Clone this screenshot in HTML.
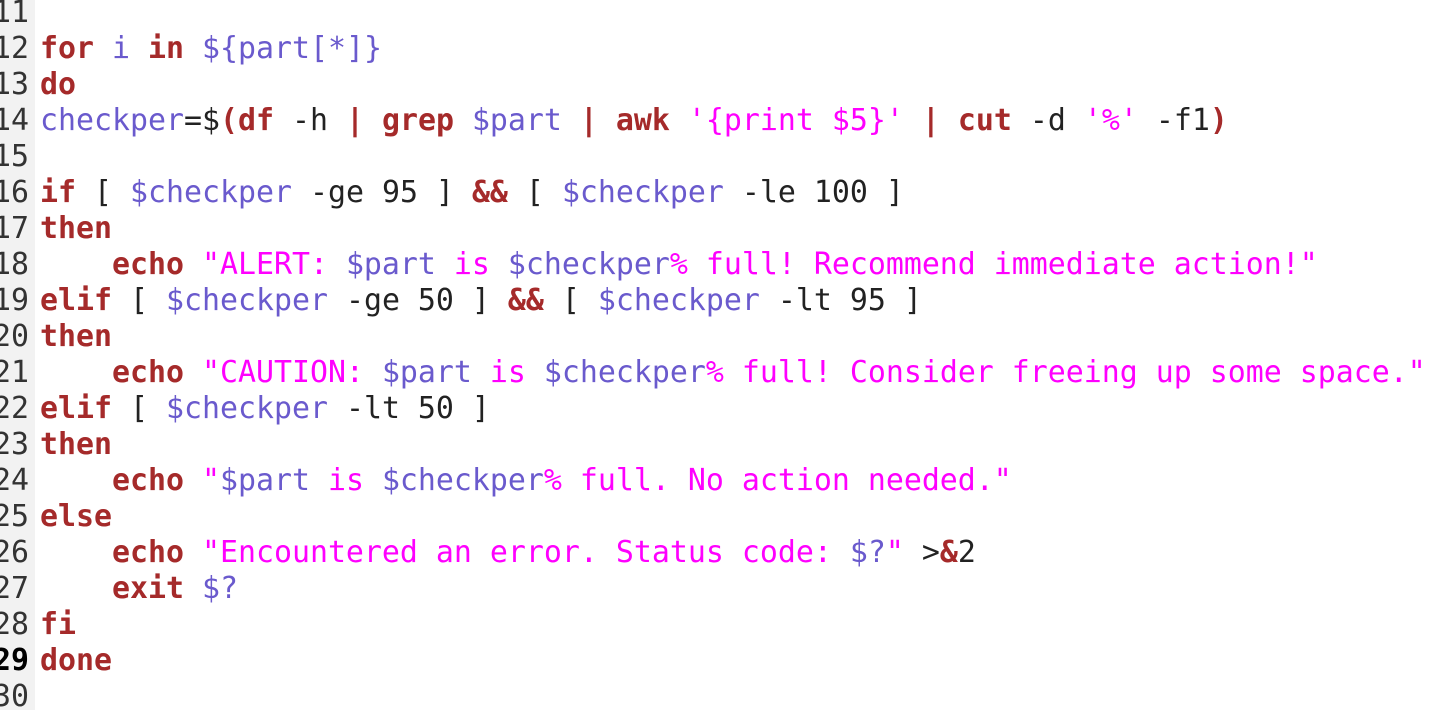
<!DOCTYPE html>
<html><head><meta charset="utf-8"><style>
html,body{margin:0;padding:0;background:#fff;width:1434px;height:710px;overflow:hidden}
.g{position:absolute;left:0;top:0;width:35px;height:710px;background:#f2f2f2}
.ln{position:absolute;right:1405px;font:29.9px/36px "DejaVu Sans Mono",monospace;color:#333;white-space:pre;margin-top:1px}
.c{position:absolute;left:40px;font:29.9px/36px "DejaVu Sans Mono",monospace;color:#222;white-space:pre;margin-top:1px}
.k{color:#a52a2a;font-weight:bold}
.v{color:#6a5acd}
.s{color:#f0f}
</style></head><body>
<div class="g"></div>
<div class="ln" style="top:-6px">11</div>
<div class="ln" style="top:30px">12</div>
<div class="ln" style="top:66px">13</div>
<div class="ln" style="top:102px">14</div>
<div class="ln" style="top:138px">15</div>
<div class="ln" style="top:174px">16</div>
<div class="ln" style="top:210px">17</div>
<div class="ln" style="top:246px">18</div>
<div class="ln" style="top:282px">19</div>
<div class="ln" style="top:318px">20</div>
<div class="ln" style="top:354px">21</div>
<div class="ln" style="top:390px">22</div>
<div class="ln" style="top:426px">23</div>
<div class="ln" style="top:462px">24</div>
<div class="ln" style="top:498px">25</div>
<div class="ln" style="top:534px">26</div>
<div class="ln" style="top:570px">27</div>
<div class="ln" style="top:606px">28</div>
<div class="ln" style="top:642px;font-weight:bold;color:#000">29</div>
<div class="ln" style="top:678px">30</div>

<div class="c" style="top:30px"><span class="k">for</span> <span class="v">i</span> <span class="k">in</span> <span class="v">${part[*]}</span></div>
<div class="c" style="top:66px"><span class="k">do</span></div>
<div class="c" style="top:102px"><span class="v">checkper</span>=$<span class="k">(df</span> -h <span class="k">|</span> <span class="k">grep</span> <span class="v">$part</span> <span class="k">|</span> <span class="k">awk</span> <span class="s">'{print $5}'</span> <span class="k">|</span> <span class="k">cut</span> -d <span class="s">'%'</span> -f1<span class="k">)</span></div>
<div class="c" style="top:174px"><span class="k">if</span> [ <span class="v">$checkper</span> -ge 95 ] <span class="k">&amp;&amp;</span> [ <span class="v">$checkper</span> -le 100 ]</div>
<div class="c" style="top:210px"><span class="k">then</span></div>
<div class="c" style="top:246px">    <span class="k">echo</span> <span class="s">"ALERT: <span class="v">$part</span> is <span class="v">$checkper</span>% full! Recommend immediate action!"</span></div>
<div class="c" style="top:282px"><span class="k">elif</span> [ <span class="v">$checkper</span> -ge 50 ] <span class="k">&amp;&amp;</span> [ <span class="v">$checkper</span> -lt 95 ]</div>
<div class="c" style="top:318px"><span class="k">then</span></div>
<div class="c" style="top:354px">    <span class="k">echo</span> <span class="s">"CAUTION: <span class="v">$part</span> is <span class="v">$checkper</span>% full! Consider freeing up some space."</span></div>
<div class="c" style="top:390px"><span class="k">elif</span> [ <span class="v">$checkper</span> -lt 50 ]</div>
<div class="c" style="top:426px"><span class="k">then</span></div>
<div class="c" style="top:462px">    <span class="k">echo</span> <span class="s">"<span class="v">$part</span> is <span class="v">$checkper</span>% full. No action needed."</span></div>
<div class="c" style="top:498px"><span class="k">else</span></div>
<div class="c" style="top:534px">    <span class="k">echo</span> <span class="s">"Encountered an error. Status code: <span class="v">$?</span>"</span> &gt;<span class="k">&amp;</span>2</div>
<div class="c" style="top:570px">    <span class="k">exit</span> <span class="v">$?</span></div>
<div class="c" style="top:606px"><span class="k">fi</span></div>
<div class="c" style="top:642px"><span class="k">done</span></div>
</body></html>
